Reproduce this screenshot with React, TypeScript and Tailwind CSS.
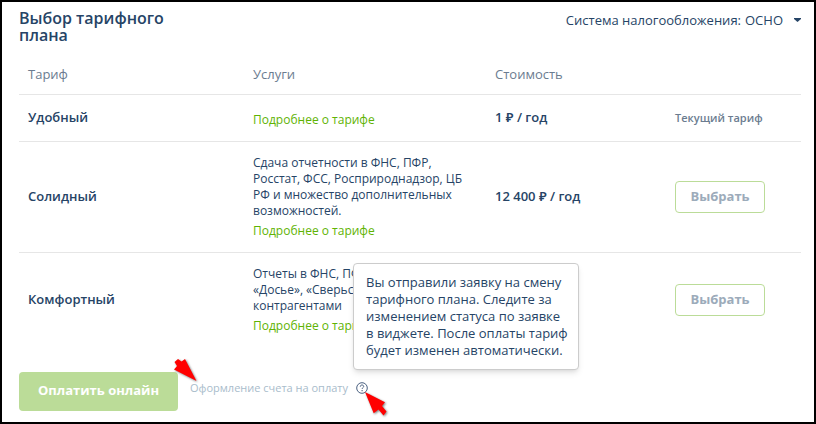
import React, { useState } from "react";

type Plan = {
    id: string;
    name: string;
    description?: string;
    price?: string;
    current?: boolean;
};

const plans: Plan[] = [
    { id: "handy", name: "Удобный", price: "1 ₽ / год", current: true },
    {
        id: "solid",
        name: "Солидный",
        description: "Сдача отчетности в ФНС, ПФР, Росстат, ФСС, Росприроднадзор, ЦБ РФ и множество дополнительных возможностей.",
        price: "12 400 ₽ / год",
    },
    {
        id: "comfort",
        name: "Комфортный",
        description: "Отчеты в ФНС, ПФР,\n«Досье», «Сверься» с\nконтрагентами",
    },
];

function HelpTooltip() {
    return (
        <div className="relative flex">
            <button type="button" aria-label="Справка" aria-describedby="request-hint" className="text-[#4a6080]">
                <svg width="12" height="12" viewBox="0 0 12 12" fill="none" stroke="currentColor">
                    <circle cx="6" cy="6" r="5.3" strokeWidth="1" />
                    <path d="M4.3 4.7C4.3 3.6 5 3 6 3s1.7.6 1.7 1.5c0 1.1-1.6 1.2-1.6 2.5" strokeWidth="1" />
                    <path d="M6.1 8v1.2" strokeWidth="1.1" />
                </svg>
            </button>
            <div
                id="request-hint"
                role="tooltip"
                className="absolute bottom-full -left-[3px] z-10 mb-3 w-[226px] rounded border border-[#cccccc] bg-white py-2.5 pr-2 pl-3 text-[13px] leading-[17px] text-[#264466] shadow-md"
            >
                Вы отправили заявку на смену тарифного плана. Следите за изменением статуса по заявке в виджете. После оплаты тариф будет изменен автоматически.
            </div>
        </div>
    );
}

function Pointer({ points, className }: { points: string; className: string }) {
    return (
        <svg
            aria-hidden="true"
            width="26"
            height="28"
            viewBox="0 0 26 28"
            className={`pointer-events-none absolute z-20 drop-shadow-[1px_1px_1px_rgba(0,0,0,0.5)] ${className}`}
        >
            <polygon points={points} fill="#ff0000" />
        </svg>
    );
}

export default function App() {
    const [tax, setTax] = useState("ОСНО");

    return (
        <main className="min-h-screen border-2 border-black bg-white pr-[13px] pb-2.5 pl-[17px] font-['Open_Sans','Noto_Sans',sans-serif] text-[#264466]">
            <header className="flex items-start justify-between pt-2 pb-2.5">
                <h1 className="w-[180px] text-[16px] leading-[17px] font-semibold">Выбор тарифного плана</h1>
                <div className="flex items-center text-[13px] leading-5">
                    <label htmlFor="tax">Система налогообложения:</label>
                    <div className="relative ml-1 flex items-center">
                        <select
                            id="tax"
                            value={tax}
                            onChange={(e) => setTax(e.target.value)}
                            className="appearance-none bg-transparent pr-[18px] [field-sizing:content] focus:outline-none"
                        >
                            <option>ОСНО</option>
                            <option>УСН</option>
                        </select>
                        <svg width="7" height="4" viewBox="0 0 7 4" className="pointer-events-none absolute right-0">
                            <path d="M0 0h7v1L3.5 4 0 1z" fill="#264466" />
                        </svg>
                    </div>
                </div>
            </header>

            <table className="w-full table-fixed border-collapse text-left">
                <colgroup>
                    <col className="w-[225px]" />
                    <col className="w-[242px]" />
                    <col className="w-[180px]" />
                    <col />
                </colgroup>
                <thead>
                    <tr className="h-10 border-b border-[#e6e6e6] text-[13px] leading-4 text-[#6b7c90]">
                        <th className="px-[9px] font-normal">Тариф</th>
                        <th className="px-[9px] font-normal">Услуги</th>
                        <th className="px-[9px] font-normal">Стоимость</th>
                        <th aria-label="Действие"></th>
                    </tr>
                </thead>
                <tbody>
                    {plans.map((plan) => (
                        <tr key={plan.id} className="border-b border-[#e6e6e6] last:border-b-0">
                            <th className="px-[9px] pb-0.5 text-[13px] leading-4 font-semibold">{plan.name}</th>
                            <td className="px-[9px] py-[13px] text-[12px] leading-4">
                                {plan.description && <p className="whitespace-pre-line">{plan.description}</p>}
                                <a href="#" className="mt-1 block text-[#5fb304]">Подробнее о тарифе</a>
                            </td>
                            <td className="px-[9px] pb-0.5 text-[13px] leading-4 font-semibold">{plan.price}</td>
                            <td className="pl-[9px]">
                                {plan.current ? (
                                    <p className="text-[11px] leading-4 font-semibold text-[#6b7c90]">Текущий тариф</p>
                                ) : (
                                    <button
                                        type="button"
                                        className="block h-8 w-[90px] rounded border border-[#bbdc98] text-[13px] font-bold text-[#9cabba]"
                                    >
                                        Выбрать
                                    </button>
                                )}
                            </td>
                        </tr>
                    ))}
                </tbody>
            </table>

            <footer className="mt-[25px] flex items-center">
                <button type="button" className="h-[39px] w-[159px] rounded bg-[#bbdc98] text-[13px] font-bold text-white">
                    Оплатить онлайн
                </button>
                <div className="relative -mt-1.5 ml-3 flex items-center gap-2">
                    <a href="#" className="text-[11px] leading-4 text-[#a9bccb]">Оформление счета на оплату</a>
                    <HelpTooltip />
                    <Pointer className="-top-[22px] -left-[17px]" points="1.5,4 5,1 8.5,3.5 12,1 23.5,23 1,11.5 4,8" />
                    <Pointer className="top-2.5 -right-[22px]" points="1,2 21,12.3 18,16 22.5,21.5 19.5,25.5 14.5,19.5 9.7,23.3" />
                </div>
            </footer>
        </main>
    );
}
